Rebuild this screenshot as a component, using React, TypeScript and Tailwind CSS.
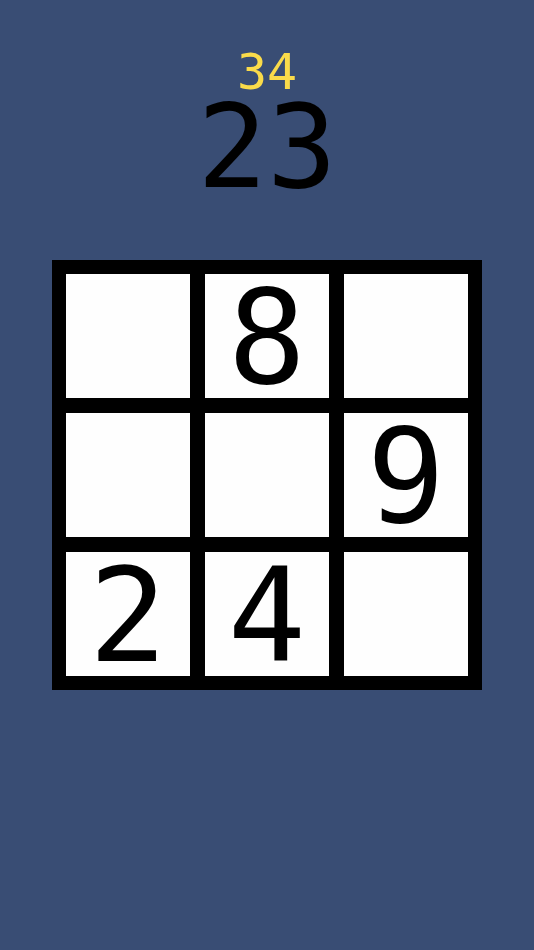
import { useState } from "react";

const startCells: (number | null)[] = [null, 8, null, null, null, 9, 2, 4, null];

interface CellProps {
  value: number | null;
  index: number;
  onPress: () => void;
}

function Cell({ value, index, onPress }: CellProps) {
  const row = Math.floor(index / 3) + 1;
  const column = (index % 3) + 1;

  return (
    <button
      type="button"
      onClick={onPress}
      aria-label={`Row ${row}, column ${column}: ${value ?? "empty"}`}
      className="flex aspect-square min-w-0 items-center justify-center bg-[#fefefe] pt-1 text-[130px] leading-[120px] text-black"
    >
      {value}
    </button>
  );
}

export default function App() {
  const [cells, setCells] = useState(startCells);

  // Pressing a tile clears it
  const clearCell = (index: number) => {
    setCells((current) => current.map((value, i) => (i === index ? null : value)));
  };

  return (
    <main className="min-h-screen bg-[#394d74] px-[52px] py-[52px] font-['DejaVu_Sans_Mono',monospace]">
      {/* Scores */}
      <header className="flex flex-col items-center">
        <p className="text-[50px] leading-[40px] text-[#fadb4a]">34</p>
        <p className="text-[116px] leading-[110px] text-black">23</p>
      </header>

      {/* Board */}
      <section className="mx-auto mt-[58px] grid max-w-xl grid-cols-3 gap-[15px] bg-black p-[14px]">
        {cells.map((value, index) => (
          <Cell key={index} value={value} index={index} onPress={() => clearCell(index)} />
        ))}
      </section>
    </main>
  );
}
